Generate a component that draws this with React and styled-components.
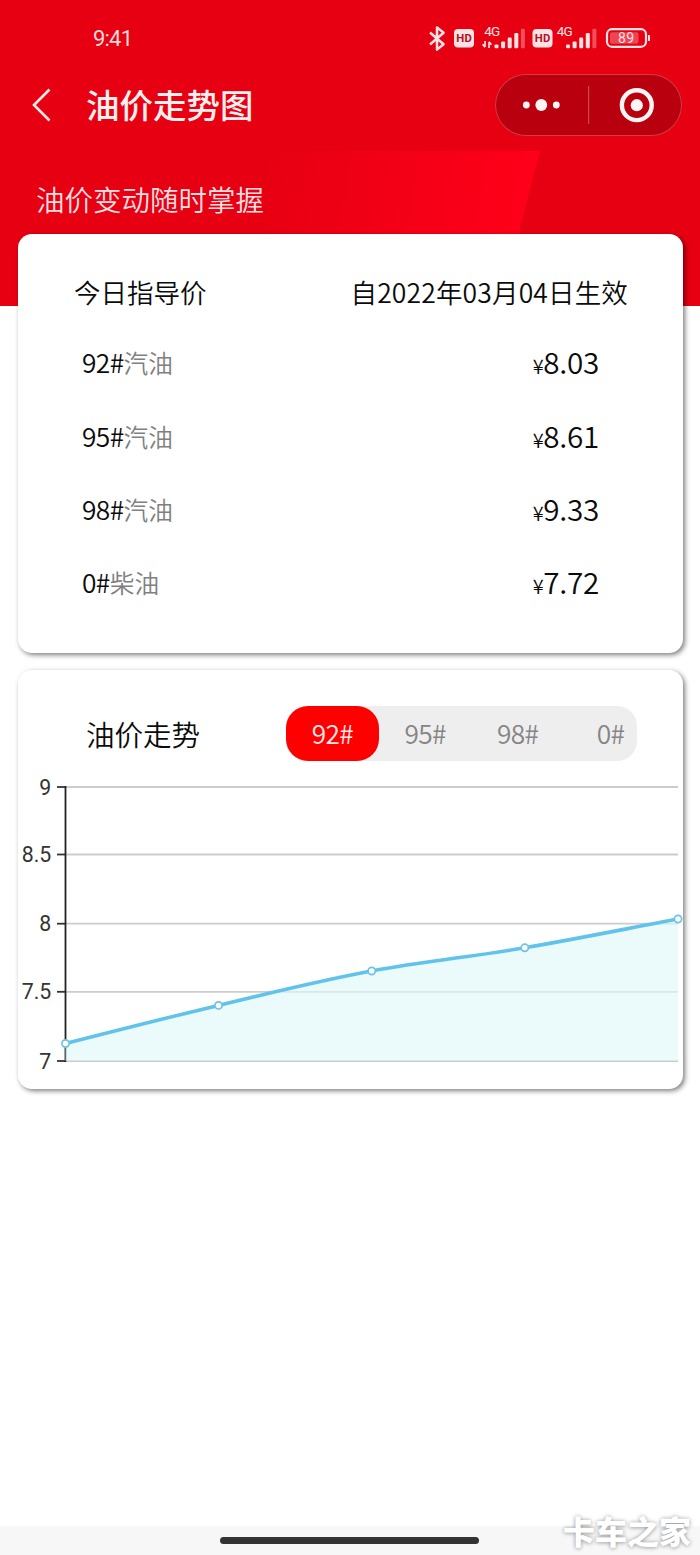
import React, { useState } from "react";
import styled, { createGlobalStyle } from "styled-components";

const GUIDE_PRICES = [
  { grade: "92#", kind: "汽油", price: "8.03" },
  { grade: "95#", kind: "汽油", price: "8.61" },
  { grade: "98#", kind: "汽油", price: "9.33" },
  { grade: "0#", kind: "柴油", price: "7.72" },
];

const Y_TICKS = [
  { label: "9", y: 117 },
  { label: "8.5", y: 184.5 },
  { label: "8", y: 253.7 },
  { label: "7.5", y: 321.8 },
  { label: "7", y: 391 },
];

const POINTS = [
  [47.5, 373.5],
  [200.5, 335.4],
  [353.7, 301],
  [506.8, 277.8],
  [660, 249],
];

const LINE =
  "M47.5 373.5C98.5 360.5 149.4 347.5 200.5 335.4C251.5 323 302.5 310.4 353.7 301C404.5 291.5 455.8 286.5 506.8 277.8C557.8 269 609 258.6 660 249";

const StatusIcons = () => (
  <svg width="230" height="40" viewBox="0 0 230 40" fill="#ffe3e4">
    <path
      d="M10 13.5 23.6 25.2 17 30.6V8.4L23.6 13.8 10 25.5"
      fill="none"
      stroke="#ffe3e4"
      strokeWidth="2.5"
      strokeLinejoin="round"
    />
    <rect x="34" y="10" width="20" height="18.5" rx="4" />
    <IconText x="44" y="23.3" size={11.3} bold dark textLength="15.5">
      HD
    </IconText>
    <IconText x="72.2" y="17" size={13.5} textLength="16">
      4G
    </IconText>
    <path
      d="M65 22v6M62.6 25.2l2.4 3M69 29v-6M69 22.8l2.4 3"
      fill="none"
      stroke="#ffe3e4"
      strokeWidth="1.7"
    />
    <Bars x={74.5} />
    <rect x="112.5" y="10" width="20" height="18.5" rx="4" />
    <IconText x="122.5" y="23.3" size={11.3} bold dark textLength="15.5">
      HD
    </IconText>
    <IconText x="144.7" y="17" size={13.5} textLength="16">
      4G
    </IconText>
    <Bars x={146} />
    <rect
      x="187"
      y="10.2"
      width="39"
      height="17.6"
      rx="5"
      fill="none"
      stroke="#ffe3e4"
      strokeWidth="2.2"
    />
    <rect x="190" y="13.2" width="28.5" height="11.6" rx="2" opacity=".3" />
    <path d="M228 16h1q1.2 0 1.2 1.5v3q0 1.5-1.2 1.5h-1z" />
    <IconText x="206" y="24" size={14} textLength="16">
      89
    </IconText>
  </svg>
);

// the first bars sit below the network label, so they stay short
const Bars = ({ x }) => (
  <g>
    <rect x={x} y="25.4" width="4" height="3.8" rx="1.2" />
    <rect x={x + 6.6} y="22.4" width="4" height="6.8" rx="1.2" />
    <rect x={x + 13.2} y="18.6" width="4" height="10.6" rx="1.2" />
    <rect x={x + 19.8} y="14" width="4" height="15.2" rx="1.2" />
    <rect x={x + 26.4} y="9.8" width="4" height="19.4" rx="1.2" opacity=".35" />
  </g>
);

const TrendChart = () => (
  <Chart viewBox="0 0 665 419">
    {Y_TICKS.map(({ label, y }) => (
      <g key={label}>
        <line x1="48" x2="660" y1={y} y2={y} stroke="#ccc" strokeWidth="1.8" />
        <line x1="39" x2="48" y1={y} y2={y} stroke="#333" strokeWidth="1.8" />
        <AxisLabel x="33.3" y={y + 7.6}>
          {label}
        </AxisLabel>
      </g>
    ))}
    <line x1="47.5" x2="47.5" y1="116" y2="392" stroke="#222" strokeWidth="1.8" />
    <path d={`${LINE}V391H47.5Z`} fill="#dff7f9" fillOpacity=".62" />
    <path d={LINE} fill="none" stroke="#62c3ea" strokeWidth="3.6" />
    {POINTS.map(([x, y]) => (
      <circle
        key={x}
        cx={x}
        cy={y}
        r="3.6"
        fill="#fff"
        stroke="#6bc4e3"
        strokeWidth="1.7"
      />
    ))}
  </Chart>
);

const App = () => {
  const [active, setActive] = useState("92#");

  return (
    <Page>
      <GlobalStyle />
      <Header>
        <StatusBar>
          <Time>9:41</Time>
          <StatusIcons />
        </StatusBar>
        <NavBar>
          <BackIcon viewBox="0 0 20 34">
            <path d="M17.5 1.5 2 17l15.5 15.5" />
          </BackIcon>
          <Title>油价走势图</Title>
          <Capsule>
            <svg width="187" height="62" viewBox="0 0 187 62" fill="#fff5f5">
              <circle cx="31.3" cy="31" r="3.4" />
              <circle cx="46.3" cy="31" r="5.9" />
              <circle cx="61.3" cy="31" r="3.4" />
              <rect x="93.2" y="12" width="1" height="38" opacity=".35" />
              <circle cx="141.8" cy="31.2" r="6.1" />
              <circle
                cx="141.8"
                cy="31.2"
                r="14.9"
                fill="none"
                stroke="#fff5f5"
                strokeWidth="4.4"
              />
            </svg>
          </Capsule>
        </NavBar>
        <Banner>
          <Slogan>油价变动随时掌握</Slogan>
        </Banner>
      </Header>

      <Cards>
        <Card>
          <GuideHead>
            <span>今日指导价</span>
            <EffectiveDate>自2022年03月04日生效</EffectiveDate>
          </GuideHead>
          {GUIDE_PRICES.map(({ grade, kind, price }) => (
            <PriceRow key={grade}>
              <Grade>
                {grade}
                <Kind>{kind}</Kind>
              </Grade>
              <Price>
                <Yen>¥</Yen>
                {price}
              </Price>
            </PriceRow>
          ))}
        </Card>

        <Card>
          <TrendHead>
            <TrendTitle>油价走势</TrendTitle>
            <Tabs>
              {GUIDE_PRICES.map(({ grade }) => (
                <Tab
                  key={grade}
                  $active={grade === active}
                  onClick={() => setActive(grade)}
                >
                  {grade}
                </Tab>
              ))}
            </Tabs>
          </TrendHead>
          <TrendChart />
        </Card>
      </Cards>

      <BottomBar>
        <HomeIndicator />
        <Watermark>卡车之家</Watermark>
      </BottomBar>
    </Page>
  );
};

const GlobalStyle = createGlobalStyle`
  * {
    box-sizing: border-box;
  }
  body {
    margin: 0;
    background: #fff;
    font-family: "Noto Sans CJK SC", "Noto Sans", sans-serif;
    font-weight: 350;
    color: #0b0b0b;
  }
`;

const Page = styled.div`
  display: flex;
  flex-direction: column;
  width: 700px;
  height: 1555px;
  overflow: hidden;
`;

const Header = styled.header`
  height: 306px;
  flex-shrink: 0;
  background: #e60012;
`;

const StatusBar = styled.div`
  display: flex;
  justify-content: space-between;
  align-items: center;
  height: 72px;
  padding: 6px 50px 0 93px;
`;

const Time = styled.span`
  font-family: Roboto, sans-serif;
  font-size: 22px;
  font-weight: 400;
  line-height: 26px;
  letter-spacing: -0.8px;
  color: #ffd9db;
`;

const IconText = styled.text`
  font-family: Roboto, sans-serif;
  font-size: ${({ size }) => size}px;
  font-weight: ${({ bold }) => (bold ? 700 : 400)};
  text-anchor: middle;
  fill: ${({ dark }) => (dark ? "#b5101c" : "#ffe3e4")};
`;

const NavBar = styled.div`
  display: flex;
  align-items: center;
  height: 66px;
  padding: 0 18px 0 32px;
`;

const BackIcon = styled.svg`
  width: 20px;
  height: 34px;
  fill: none;
  stroke: #ffeaea;
  stroke-width: 2.6;
`;

const Title = styled.h1`
  flex: 1;
  margin: 0 0 3px 34px;
  font-size: 33.5px;
  font-weight: 500;
  line-height: 50px;
  color: #fff0f0;
`;

const Capsule = styled.div`
  width: 187px;
  height: 62px;
  border-radius: 31px;
  background: #b9000e;
  box-shadow: inset 0 0 0 1px #d83a44;
`;

const Banner = styled.div`
  position: relative;
  height: 155px;
  margin-top: 13px;
  padding: 26px 0 0 36px;
  background: linear-gradient(100deg, #e60012 45%, #ff0019 95%) no-repeat;
  background-size: 541px 155px;

  /* slanted right edge of the highlight */
  &::after {
    content: "";
    position: absolute;
    top: 0;
    right: 0;
    width: 200px;
    height: 155px;
    background: #e60012;
    clip-path: polygon(40px 0, 100% 0, 100% 100%, 0 100%);
  }
`;

const Slogan = styled.div`
  font-size: 28.5px;
  line-height: 44px;
  color: #ffdfe0;
`;

const Cards = styled.main`
  position: relative;
  display: flex;
  flex-direction: column;
  gap: 17px;
  margin: -72px 17px 0 18px;
`;

const Card = styled.section`
  height: 419px;
  border-radius: 14px;
  background: #fff;
  box-shadow: 2px 2px 5px rgba(0, 0, 0, 0.5);
`;

const GuideHead = styled.div`
  display: flex;
  justify-content: space-between;
  padding: 38px 55px 0 56px;
  margin-bottom: 15px;
  font-size: 26.5px;
  line-height: 40px;
`;

const EffectiveDate = styled.span`
  letter-spacing: 0.15px;
`;

const PriceRow = styled.div`
  display: flex;
  justify-content: space-between;
  align-items: center;
  height: 73.4px;
  padding: 0 84px 0 64px;
`;

const Grade = styled.div`
  padding-bottom: 3px;
  font-size: 26.3px;
  line-height: 36px;
  letter-spacing: -0.6px;
`;

const Kind = styled.span`
  font-size: 24.7px;
  letter-spacing: 0;
  color: #808080;
`;

const Price = styled.div`
  padding-top: 1px;
  font-size: 29.7px;
  line-height: 42px;
  letter-spacing: -0.3px;
`;

const Yen = styled.span`
  font-size: 20px;
`;

const TrendHead = styled.div`
  display: flex;
  justify-content: space-between;
  align-items: center;
  padding: 36px 46px 0 68px;
`;

const TrendTitle = styled.h2`
  margin: 0;
  font-size: 28.5px;
  font-weight: 350;
  line-height: 42px;
`;

const Tabs = styled.div`
  display: flex;
  width: 351px;
  height: 55px;
  border-radius: 20px;
  background: #eee;
`;

const Tab = styled.button`
  flex: 0 0 92.7px;
  height: 55px;
  padding: 0 0 3px;
  border: 0;
  border-radius: 22px;
  background: ${({ $active }) => ($active ? "#fe0000" : "transparent")};
  color: ${({ $active }) => ($active ? "#ffe9e9" : "#858585")};
  font-family: inherit;
  font-size: 26.3px;
  font-weight: 350;
  letter-spacing: -0.7px;
  cursor: pointer;
`;

const Chart = styled.svg`
  display: block;
  width: 665px;
  height: 419px;
  margin-top: -91px;
  pointer-events: none;
`;

const AxisLabel = styled.text`
  font-family: Roboto, sans-serif;
  font-size: 21.3px;
  font-weight: 400;
  text-anchor: end;
  fill: #333;
`;

const BottomBar = styled.footer`
  position: relative;
  display: flex;
  justify-content: center;
  height: 29px;
  margin-top: auto;
  flex-shrink: 0;
  background: #f7f7f7;
`;

const HomeIndicator = styled.div`
  width: 259px;
  height: 7px;
  margin: 11px 0 0 -1px;
  border-radius: 4px;
  background: #333;
`;

const Watermark = styled.div`
  position: absolute;
  right: 9px;
  bottom: 2px;
  font-size: 32px;
  font-weight: 900;
  line-height: 46px;
  color: #fff;
  text-shadow: 0 0 4px rgba(0, 0, 0, 0.28), 0 1px 4px rgba(0, 0, 0, 0.18);
`;

export default App;
